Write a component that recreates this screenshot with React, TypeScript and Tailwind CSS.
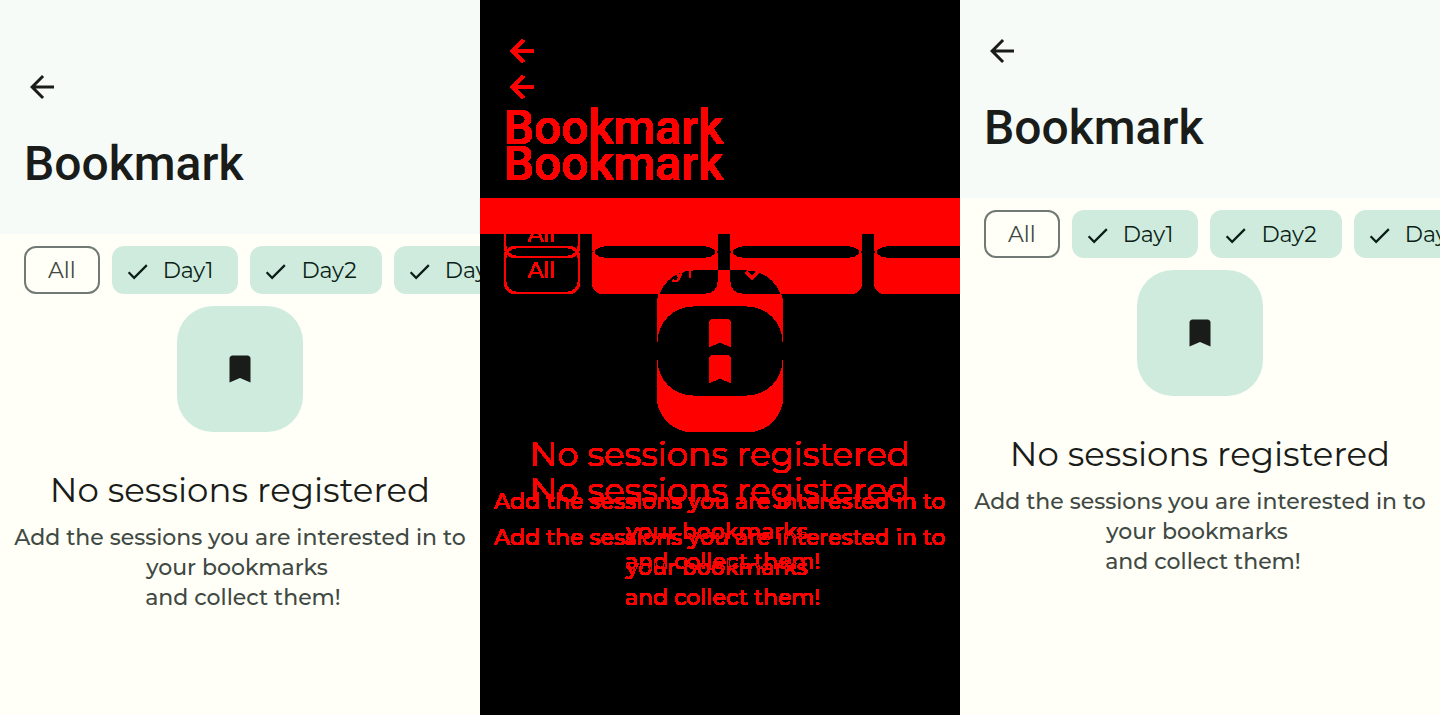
type ScreenProps = { statusBar: boolean };

const days = ["Day1", "Day2", "Day3"];

function ArrowBackIcon() {
  return (
    <svg viewBox="0 0 24 24" className="size-9" fill="currentColor" aria-hidden="true">
      <path d="M20 11H7.83l5.59-5.59L12 4l-8 8 8 8 1.41-1.41L7.83 13H20z" />
    </svg>
  );
}

function CheckIcon() {
  return (
    <svg viewBox="0 0 24 24" className="size-[27px]" fill="currentColor" aria-hidden="true">
      <path d="M9 16.17 4.83 12l-1.42 1.41L9 19 21 7l-1.41-1.41z" />
    </svg>
  );
}

function BookmarkIcon() {
  return (
    <svg viewBox="0 0 24 24" className="size-9" fill="currentColor" aria-hidden="true">
      <path d="M17 3H7c-1.1 0-1.99.9-1.99 2L5 21l7-3 7 3V5c0-1.1-.9-2-2-2z" />
    </svg>
  );
}

function BookmarkScreen({ statusBar }: ScreenProps) {
  return (
    <section className="flex min-w-0 flex-col overflow-hidden bg-[#fffff7] font-['Montserrat','Inter',sans-serif] text-[#1a1c19]">
      <header className={`bg-[#f6fbf8] px-6 pb-[39px] ${statusBar ? "pt-[69px]" : "pt-[33px]"}`}>
        <button type="button" aria-label="Back" className="block">
          <ArrowBackIcon />
        </button>
        <h1 className="mt-7 font-['Roboto',sans-serif] text-5xl/[62px] font-medium">Bookmark</h1>
      </header>

      <div className="flex gap-3 py-3 pl-6 text-[22px]/[30px]">
        <button
          type="button"
          aria-pressed="false"
          className="h-12 shrink-0 rounded-xl border-2 border-[#707974] px-[22px] pt-0.5 text-[#404943]"
        >
          All
        </button>
        {days.map((day) => (
          <button
            key={day}
            type="button"
            aria-pressed="true"
            className="flex h-12 shrink-0 items-center gap-3 rounded-xl bg-[#cfebdd] pt-0.5 pr-[25px] pl-3 text-[#0b1f17]"
          >
            <CheckIcon />
            {day}
          </button>
        ))}
      </div>

      <div className="flex flex-col items-center text-center">
        <div className="flex size-[126px] items-center justify-center rounded-[36px] bg-[#cfebdd]">
          <BookmarkIcon />
        </div>
        <h2 className="mt-9 text-[34px]/[44px]">No sessions registered</h2>
        <p className="mt-[11px] text-[22px]/[30px] font-medium text-[#404943]">
          Add the sessions you are interested in to
          <br />
          your bookmarks&nbsp;
          <br />
          &nbsp;and collect them!
        </p>
      </div>
    </section>
  );
}

/* Stacks both screens and paints every pixel that differs in red. */
function DifferenceView() {
  return (
    <div className="isolate grid min-w-0 grid-cols-1 overflow-hidden bg-black [filter:url(#changed-pixels)]">
      <svg className="absolute size-0" aria-hidden="true">
        <filter id="changed-pixels" x="0" y="0" width="1" height="1" colorInterpolationFilters="sRGB">
          <feColorMatrix values="255 255 255 0 0  0 0 0 0 0  0 0 0 0 0  0 0 0 0 1" />
        </filter>
      </svg>
      <div className="col-start-1 row-start-1 grid min-w-0">
        <BookmarkScreen statusBar />
      </div>
      <div className="col-start-1 row-start-1 grid min-w-0 mix-blend-difference">
        <BookmarkScreen statusBar={false} />
      </div>
    </div>
  );
}

export default function App() {
  return (
    <main className="grid min-h-screen grid-cols-3">
      <BookmarkScreen statusBar />
      <DifferenceView />
      <BookmarkScreen statusBar={false} />
    </main>
  );
}
